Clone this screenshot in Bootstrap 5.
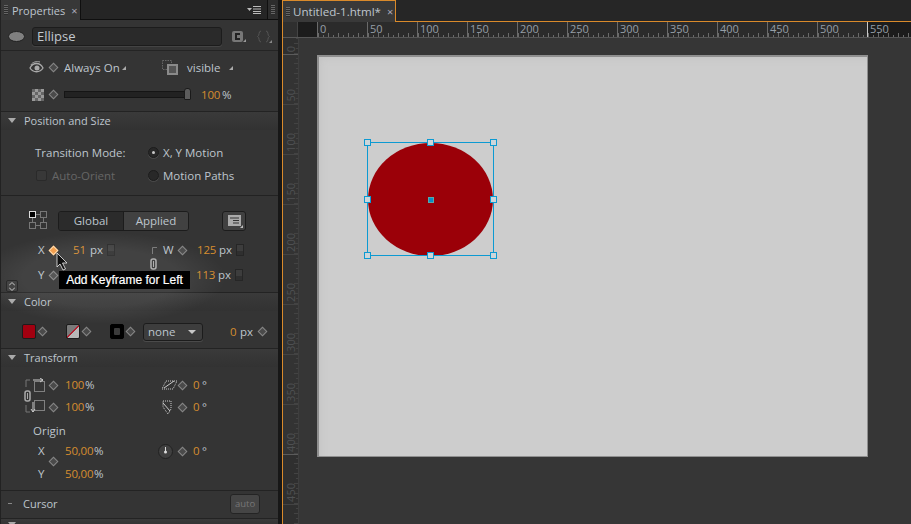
<!DOCTYPE html>
<html lang="en"><head><meta charset="utf-8"><title>Properties</title>
<link href="https://cdn.jsdelivr.net/npm/bootstrap@5.3.0/dist/css/bootstrap.min.css" rel="stylesheet">
<style>
html,body{height:524px;overflow:hidden;background:#1b1b1b}
body{font-family:"Open Sans","Liberation Sans",sans-serif;font-size:11px;font-weight:500;color:#bec5cd;line-height:1;white-space:nowrap}
.shell{width:911px;height:524px;overflow:hidden}
.pane{width:278px;height:524px;flex:none;background:#343434;border-left:1px solid #222;position:relative;overflow:hidden}
.sep{width:4px;flex:none;background:#171717}
.tabbar{height:20px;background:#252525;border-bottom:1px solid #0f0f0f}
.ptab{width:80px;background:#383838;border-right:1px solid #0f0f0f;height:20px;margin-bottom:-1px;padding-left:3px}
.grip{width:4px;height:10px;background:repeating-linear-gradient(180deg,#666 0 1px,#2b2b2b 1px 2px);flex:none}
.tabx{color:#aab;font-size:11px;font-weight:400}
.ptab .tabt{margin-left:4px;margin-right:6px;font-size:11px}
.menuic{margin-left:auto;margin-right:6px;align-self:center}
.endgrip{width:11px;height:19px;border-left:1px solid #0f0f0f;padding-left:3px;background:#2d2d2d}
.namebar{height:31px;border-bottom:1px solid #242424;padding-left:7px;padding-top:3px}
.namefield{width:190px;height:19px;margin-left:7px;margin-right:10px;background:#2a2a2a;border:1px solid #1c1c1c;border-radius:3px;padding-left:4px;font-size:13px;font-weight:400;color:#c2c8ce;box-shadow:0 1px 0 #444}
.nameic{margin-right:11px}
.rw{display:grid;align-items:center}
.rw>*{justify-self:start}
.h27{height:27px}.h23{height:23px}.h21{height:21px}.h20{height:20px}
.t-eye{padding-left:28px;grid-template-columns:20px 15px 58px 40px 25px 42px auto}
.t-sld{padding-left:31px;grid-template-columns:17px 15px 137px 21px auto}
.t-tr1{padding-left:34px;grid-template-columns:113px 15px auto}
.t-tr2{padding-left:35px;grid-template-columns:16px 96px 15px auto}
.t-glb{padding-left:28px;grid-template-columns:29px 164px auto}
.t-x{padding-left:37px;grid-template-columns:11px 24px 17px 17px 45px 11px 15px 19px 22px 17px auto}
.t-y{padding-left:37px;grid-template-columns:11px 58px 89px 22px 17px auto}
.t-col{padding-left:21px;grid-template-columns:16px 28px 16px 28px 16px 17px 87px 10px 18px auto}
.t-tf{padding-left:24px;grid-template-columns:24px 16px 20px 77px 16px 15px 9px auto}
.t-ox{padding-left:37px;grid-template-columns:27px 29px 64px 20px 15px 9px auto}
.sec1{height:60px;padding-top:3px}
.sec2{height:66px;padding-top:11px;border-bottom:1px solid #222}
.sec3{height:96px;padding-top:14px;position:relative}
.sec4{height:37px;padding-top:10px}
.sec5{height:123px;padding-top:8px;position:relative}
.hdr{height:19px;background:linear-gradient(#3a3a3a,#323232);border-top:1px solid #232323;padding-left:7px;padding-bottom:2px;font-size:11px;color:#bec5cd}
.tri{width:0;height:0;border-left:4px solid transparent;border-right:4px solid transparent;border-top:5px solid #aaa;margin-right:8px}
.dash{width:4px;height:1px;background:#888;margin-right:11px}
.dia{width:7px;height:7px;margin-left:1px;transform:rotate(45deg);background:#4a4a4a;border:1px solid #868686}
.dia.on{background:#f39a45;border-color:#ffdcae}
.org{color:#d68d2f;letter-spacing:-.2px}
.big{font-size:11.5px}
.sld{width:127px;height:7px;background:#222;border:1px solid #151515;position:relative}
.thumb{position:absolute;right:-1px;top:-4px;width:7px;height:12px;background:#5c5c5c;border:1px solid #1a1a1a;border-radius:3px 3px 1px 1px}
.chk{width:12px;height:12px;background:conic-gradient(#999 25%,#666 0 50%,#999 0 75%,#666 0) 0 0/6px 6px}
.radio1{width:11px;height:11px;border-radius:50%;background:#282828;border:1px solid #1c1c1c;box-shadow:0 1px 0 #484848;display:flex;align-items:center;justify-content:center}
.radio1 i{width:3px;height:3px;border-radius:50%;background:#c8c8c8}
.cbox{width:11px;height:11px;border-radius:2px;border:1px solid #2a2a2a;background:#383838}
.big.dim{color:#666}
.seg{height:20px;width:131px;border:1px solid #1c1c1c;border-radius:3px;overflow:hidden;display:flex}
.seg span{display:flex;align-items:center;justify-content:center;font-size:11.5px}
.seg .sa{width:65px;background:#2b2b2b;border-right:1px solid #1c1c1c}
.seg .sb{flex:1;background:#414141}
.ibtn{width:24px;height:20px;border:1px solid #1c1c1c;border-radius:3px;background:#404040;display:flex;align-items:center;justify-content:center;position:relative}
.cor{position:absolute;right:2px;bottom:2px;width:0;height:0;border-left:3px solid transparent;border-bottom:3px solid #bbb}
.bar{width:8px;height:12px;background:#2f2f2f;border:1px solid #262626;box-shadow:inset 0 6px 0 #3d3d3d}
.halo{position:absolute;left:-25px;top:232px;width:250px;height:92px;border-radius:50%;background:radial-gradient(closest-side,rgba(255,255,255,.07) 62%,rgba(255,255,255,0));pointer-events:none}
.tip{position:absolute;left:58px;top:271px;width:131px;height:18px;background:#000;color:#fff;font:12px "Liberation Sans",sans-serif;display:flex;align-items:center;justify-content:center;z-index:5;-webkit-text-stroke:.2px #fff}
.arrow{position:absolute;left:55px;top:252px;z-index:6}
.linkic{position:absolute;left:149px;top:62px}
.mini{position:absolute;left:5px;top:280px;width:12px;height:12px;background:#444;border:1px solid #2a2a2a;border-radius:2px;display:flex;align-items:center;justify-content:center;z-index:4}
.sw{width:14px;height:15px;border-radius:2px;border:1px solid #1c1c1c}
.sw.red{background:#a20010}
.sw.gr{background:linear-gradient(to top left,#b7b7b7 46%,#b02030 46% 54%,#7a7a7a 54%)}
.sw.blk{background:#000;display:flex;align-items:center;justify-content:center;border-color:#000}
.sw.blk i{width:6px;height:7px;background:#3a3a3a;border-radius:1px}
.sel{width:60px;height:18px;background:#3d3d3d;border:1px solid #1c1c1c;border-radius:3px;padding:0 6px 0 4px;font-size:11.5px;box-shadow:0 1px 0 #4a4a4a}
.sel b{width:0;height:0;border-left:4px solid transparent;border-right:4px solid transparent;border-top:4px solid #c8c8c8}
.orig{padding-left:32px;margin-top:4px}
.mt2{margin-top:2px}.mt3{margin-top:3px}.mt9{margin-top:9px}.mt5{margin-top:5px}
.odia{position:absolute;left:48px;top:91px}
.tlink{position:absolute;left:23px;top:23px}
.autob{width:30px;height:20px;background:#454545;border:1px solid #242424;border-radius:3px;margin-left:auto;margin-right:18px;font-size:9.5px;color:#777;display:flex;align-items:center;justify-content:center;font-weight:400}
.hdr.tall{height:28px;background:#343434;padding-bottom:2px}
.hdr.last{height:8px;overflow:hidden;align-items:flex-start!important;padding-top:3px}
.doc{flex:1;border-left:1px solid #d98a2b;min-width:0}
.dtabs{height:22px;background:#262626;border-bottom:1px solid #d98a2b}
.dtab{width:113px;height:22px;background:#393939;border-top:1px solid #d98a2b;border-right:1px solid #d98a2b;padding-left:3px;font-size:11.6px}
.dtab .tabt{margin:0 6px 0 3px;font-weight:400}
.rulerh{height:16px;background:#2b2b2b;border-bottom:1px solid #565656}
.corner{width:15px;flex:none;background:#2f2f2f;border-right:1px solid #444}
.hc{width:50px;flex:none;height:15px;border-left:1px solid #6a6a6a;padding:1px 0 0 2px;font-size:11px;font-weight:400;color:#969ea6;background:repeating-linear-gradient(90deg,#6a6a6a 0 1px,transparent 1px 10px) left bottom/100% 4px no-repeat,repeating-linear-gradient(90deg,#6a6a6a 0 1px,transparent 1px 5px) left bottom/100% 2px no-repeat}
.hc.out{background-color:#1c1c1c}
.hd{width:19px;flex:none;background:#1c1c1c}
.hc.white{border-left-color:#c8c8c8;flex:1}
.work{height:486px;position:relative;overflow:hidden;background:#363636}
.vr{width:16px;flex:none;background:#2b2b2b;border-right:1px solid #565656}
.vc{height:50px;flex:none;border-bottom:1px solid #6a6a6a;display:flex;justify-content:flex-start;padding:0 0 2px 2px;align-items:flex-end;background:repeating-linear-gradient(0deg,#6a6a6a 0 1px,transparent 1px 10px) right bottom/4px 100% no-repeat,repeating-linear-gradient(0deg,#6a6a6a 0 1px,transparent 1px 5px) right bottom/2px 100% no-repeat}
.vc span{writing-mode:vertical-rl;transform:rotate(180deg);font-size:11px;font-weight:400;color:#969ea6}
.vc.first{height:17px;background-color:#1c1c1c;border-bottom-color:#c8c8c8}
.vc.last{border-bottom-color:#c8c8c8}
.vc.dark{background-color:#1c1c1c}
.vc.fill{flex:1;border-bottom:0;background-color:#1c1c1c}
.board{position:absolute;left:34px;top:17px;width:551px;height:402px;background:#cdcdcd;border:1px solid #8f8f8f;border-left-width:2px;border-top-width:2px;box-shadow:inset 6px 6px 6px -4px #c4c4c4}
.shape{position:absolute;left:49px;top:86px;width:125px;height:113px;border-radius:50%;background:#9b0008}
.selb{position:absolute;left:48px;top:85px;width:127px;height:114px;border:1px solid #0c9ad2}
.hnd{position:absolute;width:7px;height:7px;background:#cdd6da;border:1px solid #0c9ad2}
.hn1{left:-4px;top:-4px}.hn2{left:59px;top:-4px}.hn3{right:-4px;top:-4px}
.hn4{left:-4px;top:53px}.hn5{right:-4px;top:53px}
.hn6{left:-4px;bottom:-4px}.hn7{left:59px;bottom:-4px}.hn8{right:-4px;bottom:-4px}
.hnd.hcen{left:60px;top:54px;width:6px;height:6px;background:#0c8cc8;border-color:#5aa}
</style></head><body>
<div class="shell d-flex">
 <div class="pane">
  <div class="tabbar d-flex">
   <div class="ptab d-flex align-items-center"><span class="grip"></span><span class="tabt">Properties</span><span class="tabx">×</span></div>
   <svg class="menuic" width="14" height="8" viewBox="0 0 14 8"><path d="M0 2h5L2.500 5z" fill="#bbb"/><path d="M6 .5h8M6 3h8M6 5.500h8M6 7.500h8" stroke="#bbb"/></svg>
   <div class="endgrip d-flex align-items-center"><span class="grip"></span></div>
  </div>
  <div class="namebar d-flex align-items-center">
   <svg width="17" height="11" viewBox="0 0 17 11"><ellipse cx="8.500" cy="5.500" rx="8" ry="5" fill="#808080" stroke="#222"/></svg>
   <div class="namefield d-flex align-items-center">Ellipse</div>
   <svg class="nameic" width="14" height="13" viewBox="0 0 14 13"><rect x="0" y="1" width="11" height="11" rx="2" fill="#777"/><path d="M8 4H4v5h4" fill="none" stroke="#222" stroke-width="2"/><path d="M14 9v3h-3z" fill="#999"/></svg>
   <svg width="15" height="13" viewBox="0 0 15 13"><path d="M4 1C1 1 3 6 0.500 6.500 3 7 1 12 4 12M9 1c3 0 1 5 3.500 5.500C10 7 12 12 9 12" fill="none" stroke="#555"/><path d="M15 10v3h-3z" fill="#888"/></svg>
  </div>
  <div class="sec1">
   <div class="rw h27 t-eye">
    <svg width="15" height="13" viewBox="0 0 15 13"><path d="M1 7c3-6 10-6 13 0-3 5-10 5-13 0z" fill="none" stroke="#aaa" stroke-width="1.300"/><circle cx="8" cy="7" r="2.500" fill="#aaa"/><path d="M2 4c1-3 6-4 9-3" fill="none" stroke="#aaa"/></svg>
    <span class="dia"></span><span class="big">Always On</span>
    <svg width="4" height="4" viewBox="0 0 4 4"><path d="M4 0v4H0z" fill="#aaa"/></svg>
    <svg width="16" height="15" viewBox="0 0 16 15"><rect x=".5" y=".5" width="9" height="9" fill="none" stroke="#666" stroke-dasharray="1.500 1"/><rect x="5" y="4" width="11" height="11" fill="#8a8a8a"/><rect x="7" y="6" width="7" height="7" fill="#555"/></svg>
    <span class="big">visible</span>
    <svg width="4" height="4" viewBox="0 0 4 4"><path d="M4 0v4H0z" fill="#aaa"/></svg>
   </div>
   <div class="rw h27 t-sld">
    <span class="chk"></span><span class="dia"></span>
    <div class="sld"><span class="thumb"></span></div>
    <span class="org big">100</span><span class="big">%</span>
   </div>
  </div>
  <div class="hdr d-flex align-items-center"><span class="tri"></span>Position and Size</div>
  <div class="sec2">
   <div class="rw h23 t-tr1"><span class="big">Transition Mode:</span><span class="radio1"><i></i></span><span class="big">X, Y Motion</span></div>
   <div class="rw h23 t-tr2"><span class="cbox"></span><span class="big dim">Auto-Orient</span><span class="radio1"></span><span class="big">Motion Paths</span></div>
  </div>
  <div class="sec3">
   <div class="rw h21 t-glb">
    <svg width="19" height="19" viewBox="0 0 19 19"><rect x=".5" y=".5" width="6" height="6" fill="#000" stroke="#ddd"/><rect x="11.500" y=".5" width="6" height="6" fill="none" stroke="#777"/><rect x=".5" y="11.500" width="6" height="6" fill="none" stroke="#777"/><rect x="11.500" y="11.500" width="6" height="6" fill="none" stroke="#777"/><path d="M7 3.500h4M7 14.500h4M3.500 7v4M14.500 7v4" stroke="#777"/></svg>
    <div class="seg"><span class="sa">Global</span><span class="sb">Applied</span></div>
    <div class="ibtn"><svg width="13" height="11" viewBox="0 0 13 11"><rect width="13" height="11" fill="#aaa"/><path d="M2 3h9M5 5.500h6M5 8h6" stroke="#333"/></svg><span class="cor"></span></div>
   </div>
   <div class="rw h20 t-x mt9">
    <span class="big">X</span><span class="dia on"></span><span class="org big">51</span><span class="big">px</span><span class="bar"></span>
    <svg width="5" height="7" viewBox="0 0 5 7"><path d="M.5 7V.5H5" fill="none" stroke="#777"/></svg>
    <span class="big">W</span><span class="dia"></span><span class="org big">125</span><span class="big">px</span><span class="bar"></span>
   </div>
   <div class="rw h20 t-y mt5">
    <span class="big">Y</span><span class="dia"></span><span></span><span class="org big">113</span><span class="big">px</span><span class="bar"></span>
   </div>
   <svg class="linkic" width="7" height="12" viewBox="0 0 7 12"><rect x="1" y="1" width="5" height="10" rx="2" fill="none" stroke="#aaa" stroke-width="1.500"/><path d="M3.500 3v6" stroke="#aaa"/></svg>
  </div>
  <div class="hdr d-flex align-items-center"><span class="tri"></span>Color</div>
  <div class="sec4">
   <div class="rw h21 t-col">
    <span class="sw red"></span><span class="dia"></span><span class="sw gr"></span><span class="dia"></span><span class="sw blk"><i></i></span><span class="dia"></span>
    <div class="sel d-flex align-items-center justify-content-between">none<b></b></div>
    <span class="org big">0</span><span class="big">px</span><span class="dia"></span>
   </div>
  </div>
  <div class="hdr d-flex align-items-center"><span class="tri"></span>Transform</div>
  <div class="sec5">
   <div class="rw h20 t-tf">
    <svg width="20" height="14" viewBox="0 0 20 14"><rect x="9.500" y="3.500" width="10" height="10" fill="none" stroke="#ccc" stroke-dasharray="1 1"/><path d="M8 2h10M15 0l3 2-3 2" fill="none" stroke="#ccc"/><path d="M1 9V2h4" fill="none" stroke="#777"/></svg>
    <span class="dia"></span><span class="org big">100</span><span class="big">%</span>
    <svg width="15" height="10" viewBox="0 0 15 10"><path d="M4 1h11l-4 8H0z" fill="none" stroke="#ccc" stroke-dasharray="1 1"/><path d="M2 8L12 1" stroke="#ccc"/></svg>
    <span class="dia"></span><span class="org big">0</span><span class="big">°</span>
   </div>
   <div class="rw h20 t-tf mt2">
    <svg width="20" height="14" viewBox="0 0 20 14"><rect x="9.500" y=".5" width="10" height="10" fill="none" stroke="#ccc" stroke-dasharray="1 1"/><path d="M8 2v10M6 9l2 3 2-3" fill="none" stroke="#ccc"/><path d="M1 5v7h4" fill="none" stroke="#777"/></svg>
    <span class="dia"></span><span class="org big">100</span><span class="big">%</span>
    <svg width="10" height="15" viewBox="0 0 10 15"><path d="M1 1h8v8l-3 5L1 7z" fill="none" stroke="#ccc" stroke-dasharray="1 1"/><path d="M1 3l7 8" stroke="#ccc"/></svg>
    <span class="dia"></span><span class="org big">0</span><span class="big">°</span>
   </div>
   <div class="h20 orig d-flex align-items-center big">Origin</div>
   <div class="rw h20 t-ox">
    <span class="big">X</span><span class="org big">50,00</span><span class="big">%</span>
    <svg width="15" height="15" viewBox="0 0 15 15"><circle cx="7.500" cy="7.500" r="7" fill="#404040" stroke="#222"/><path d="M7.500 3v5" stroke="#ddd"/><circle cx="7.500" cy="8" r="1.500" fill="#ddd"/></svg>
    <span class="dia"></span><span class="org big">0</span><span class="big">°</span>
   </div>
   <div class="rw h20 t-ox mt3"><span class="big">Y</span><span class="org big">50,00</span><span class="big">%</span></div>
   <span class="dia odia"></span>
   <svg class="tlink" width="7" height="12" viewBox="0 0 7 12"><rect x="1" y="1" width="5" height="10" rx="2" fill="none" stroke="#aaa" stroke-width="1.500"/><path d="M3.500 3v6" stroke="#aaa"/></svg>
  </div>
  <div class="hdr tall d-flex align-items-center"><span class="dash"></span>Cursor<div class="autob">auto</div></div>
  <div class="hdr last d-flex"><span class="tri"></span></div>
  <div class="halo"></div>
  <div class="mini"><svg width="6" height="9" viewBox="0 0 6 9"><path d="M0 3.500L3 .5l3 3M0 5.500l3 3 3-3" fill="none" stroke="#ccc"/></svg></div>
  <div class="tip">Add Keyframe for Left</div>
  <svg class="arrow" width="12" height="19" viewBox="0 0 12 19"><path d="M1 1v14l3-3 3 6 2.500-1-3-6h4.500z" fill="#111" stroke="#eee" stroke-width=".8"/></svg>
 </div>
 <div class="sep"></div>
 <div class="doc">
  <div class="dtabs d-flex"><div class="dtab d-flex align-items-center"><span class="grip"></span><span class="tabt">Untitled-1.html*</span><span class="tabx">×</span></div></div>
  <div class="rulerh d-flex">
   <div class="corner"></div><div class="hd"></div>
   <div class="hc">0</div><div class="hc">50</div><div class="hc">100</div><div class="hc">150</div><div class="hc">200</div><div class="hc">250</div><div class="hc">300</div><div class="hc">350</div><div class="hc">400</div><div class="hc">450</div><div class="hc">500</div><div class="hc out white">550</div>
  </div>
  <div class="work d-flex">
   <div class="vr d-flex flex-column">
    <div class="vc first"><span>0</span></div>
    <div class="vc"><span>50</span></div><div class="vc"><span>100</span></div><div class="vc"><span>150</span></div><div class="vc"><span>200</span></div><div class="vc"><span>250</span></div><div class="vc"><span>300</span></div><div class="vc"><span>350</span></div><div class="vc last"><span>400</span></div>
    <div class="vc dark"><span>450</span></div><div class="vc fill"></div>
   </div>
   <div class="board">
    <div class="shape"></div>
    <div class="selb">
     <span class="hnd hn1"></span><span class="hnd hn2"></span><span class="hnd hn3"></span><span class="hnd hn4"></span><span class="hnd hn5"></span><span class="hnd hn6"></span><span class="hnd hn7"></span><span class="hnd hn8"></span><span class="hnd hcen"></span>
    </div>
   </div>
  </div>
 </div>
</div>
</body></html>
